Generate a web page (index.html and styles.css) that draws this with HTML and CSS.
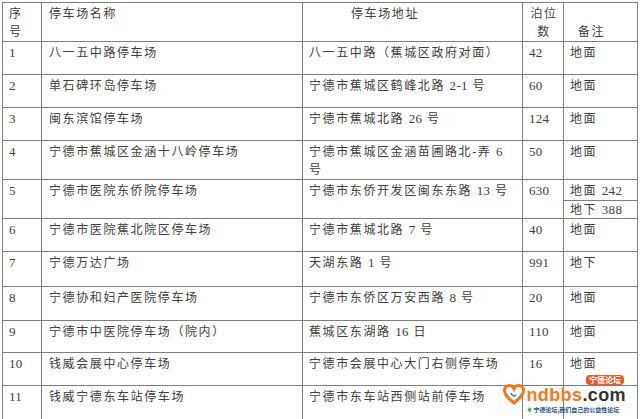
FILE: index.html
```html
<!DOCTYPE html>
<html lang="zh-CN">
<head>
<meta charset="utf-8">
<title>停车场</title>
<link rel="stylesheet" href="styles.css">
</head>
<body>
<div class="page">
  <table class="lots">
    <colgroup>
      <col class="c-no"><col class="c-name"><col class="c-addr"><col class="c-num"><col class="c-note">
    </colgroup>
    <tr class="head">
      <th>序<br>号</th>
      <th>停车场名称</th>
      <th class="addr-h">停车场地址</th>
      <th class="num-h">泊位<br>数</th>
      <th class="note-h">备注</th>
    </tr>
    <tr class="r33"><td class="n">1</td><td>八一五中路停车场</td><td>八一五中路（蕉城区政府对面）</td><td class="n">42</td><td>地面</td></tr>
    <tr class="r33"><td class="n">2</td><td>单石碑环岛停车场</td><td>宁德市蕉城区鹤峰北路 <span class="n">2-1</span> 号</td><td class="n">60</td><td>地面</td></tr>
    <tr class="r33"><td class="n">3</td><td>闽东滨馆停车场</td><td>宁德市蕉城北路 <span class="n">26</span> 号</td><td class="n">124</td><td>地面</td></tr>
    <tr class="r38"><td class="n">4</td><td>宁德市蕉城区金涵十八岭停车场</td><td>宁德市蕉城区金涵苗圃路北-弄 <span class="n">6</span><br>号</td><td class="n">50</td><td>地面</td></tr>
    <tr class="r21"><td rowspan="2" class="n">5</td><td rowspan="2">宁德市医院东侨院停车场</td><td rowspan="2">宁德市东侨开发区闽东东路 <span class="n">13</span> 号</td><td rowspan="2" class="n">630</td><td class="sub">地面 <span class="n">242</span></td></tr>
    <tr class="r18"><td class="sub sub2">地下 <span class="n">388</span></td></tr>
    <tr class="r33"><td class="n">6</td><td>宁德市医院蕉北院区停车场</td><td>宁德市蕉城北路 <span class="n">7</span> 号</td><td class="n">40</td><td>地面</td></tr>
    <tr class="r35"><td class="n">7</td><td>宁德万达广场</td><td>天湖东路 <span class="n">1</span> 号</td><td class="n">991</td><td>地下</td></tr>
    <tr class="r34"><td class="n">8</td><td>宁德协和妇产医院停车场</td><td>宁德市东侨区万安西路 <span class="n">8</span> 号</td><td class="n">20</td><td>地面</td></tr>
    <tr class="r32"><td class="n">9</td><td>宁德市中医院停车场（院内）</td><td>蕉城区东湖路 <span class="n">16</span> 日</td><td class="n">110</td><td>地面</td></tr>
    <tr class="r33"><td class="n">10</td><td>钱威会展中心停车场</td><td>宁德市会展中心大门右侧停车场</td><td class="n">16</td><td>地面</td></tr>
    <tr class="r35"><td class="n">11</td><td>钱威宁德东车站停车场</td><td>宁德市东车站西侧站前停车场</td><td></td><td></td></tr>
  </table>

  <div class="logo">
    <svg class="heart" width="22" height="21" viewBox="0 0 22 21">
      <path d="M11 19 C4.5 13.5 1.5 10.5 1.5 6.5 C1.5 3.5 3.5 1.5 6.3 1.5 C8.3 1.5 10 2.8 11 4.8 C12 2.8 13.7 1.5 15.7 1.5 C18.5 1.5 20.5 3.5 20.5 6.5 C20.5 10.5 17.5 13.5 11 19Z" fill="none" stroke="#ef7a1c" stroke-width="3"/>
      <path d="M8 9 C9 12 11 13 13 11" fill="none" stroke="#3c78c8" stroke-width="1.6"/>
    </svg>
    <div class="brand">
      <span class="badge">宁德论坛</span>
      <div class="word"><span class="nd">ndbbs</span><span class="com">.com</span></div>
      <div class="slogan"><span class="leaf">♦</span>宁德论坛,我们自己的公益性论坛</div>
    </div>
  </div>
</div>
</body>
</html>
```

FILE: styles.css
```css
html, body {
  margin: 0;
  padding: 0;
  background: #ffffff;
}

.page {
  position: relative;
  width: 640px;
  height: 419px;
  overflow: hidden;
  padding: 2px 0 0 2px;
  box-sizing: border-box;
}

.lots {
  border-collapse: collapse;
  table-layout: fixed;
  width: 635px;
  font-family: "Liberation Serif", "Noto Sans CJK SC", serif;
  font-size: 12px;
  color: #404040;
  letter-spacing: 1.6px;
}

.c-no { width: 39px; }
.c-name { width: 261px; }
.c-addr { width: 220px; }
.c-num { width: 41px; }
.c-note { width: 74px; }

.lots th,
.lots td {
  border: 1px solid #7e7e7e;
  padding: 2px 6px 0 6px;
  line-height: 18px;
  vertical-align: top;
  text-align: left;
  font-weight: normal;
  white-space: normal;
  word-break: break-all;
}

.lots td:nth-child(2),
.lots th:nth-child(2) { padding-left: 7px; }

.lots .n { letter-spacing: 0.3px; font-size: 13px; }

.head { height: 37px; }
.addr-h { padding-left: 48px !important; }
.num-h { text-align: center !important; padding-left: 2px !important; padding-right: 0 !important; }
.note-h { padding-top: 20px !important; padding-left: 14px !important; }

.r32 { height: 32px; }
.r33 { height: 33px; }
.r34 { height: 34px; }
.r35 { height: 35px; }
.r38 { height: 38px; }
.r21 { height: 21px; }
.r18 { height: 18px; }

.lots td.sub { padding-top: 3px; line-height: 16px; }
.lots td.sub2 { padding-top: 1px; }

.logo {
  position: absolute;
  right: 14px;
  bottom: 5px;
  display: flex;
  align-items: flex-end;
  gap: 1px;
}

.heart { display: block; margin-bottom: 9px; }

.brand {
  position: relative;
  display: flex;
  flex-direction: column;
  align-items: flex-start;
}

.badge {
  position: absolute;
  right: 2px;
  top: -10px;
  background: #ec5a2a;
  color: #ffffff;
  font-family: "Noto Sans CJK SC", sans-serif;
  font-size: 8px;
  line-height: 10px;
  padding: 0 3px;
  border-radius: 4px;
  font-weight: bold;
}

.word {
  font-family: "Liberation Sans", Arial, sans-serif;
  font-weight: bold;
  font-size: 18px;
  line-height: 21px;
  letter-spacing: 0.4px;
}

.nd { color: #ef7a1c; }
.com { color: #333333; }

.slogan {
  font-family: "Noto Sans CJK SC", sans-serif;
  font-size: 6px;
  line-height: 8px;
  color: #2a4a86;
  font-weight: bold;
  white-space: nowrap;
}

.leaf { color: #4caf50; margin-right: 1px; }
```
